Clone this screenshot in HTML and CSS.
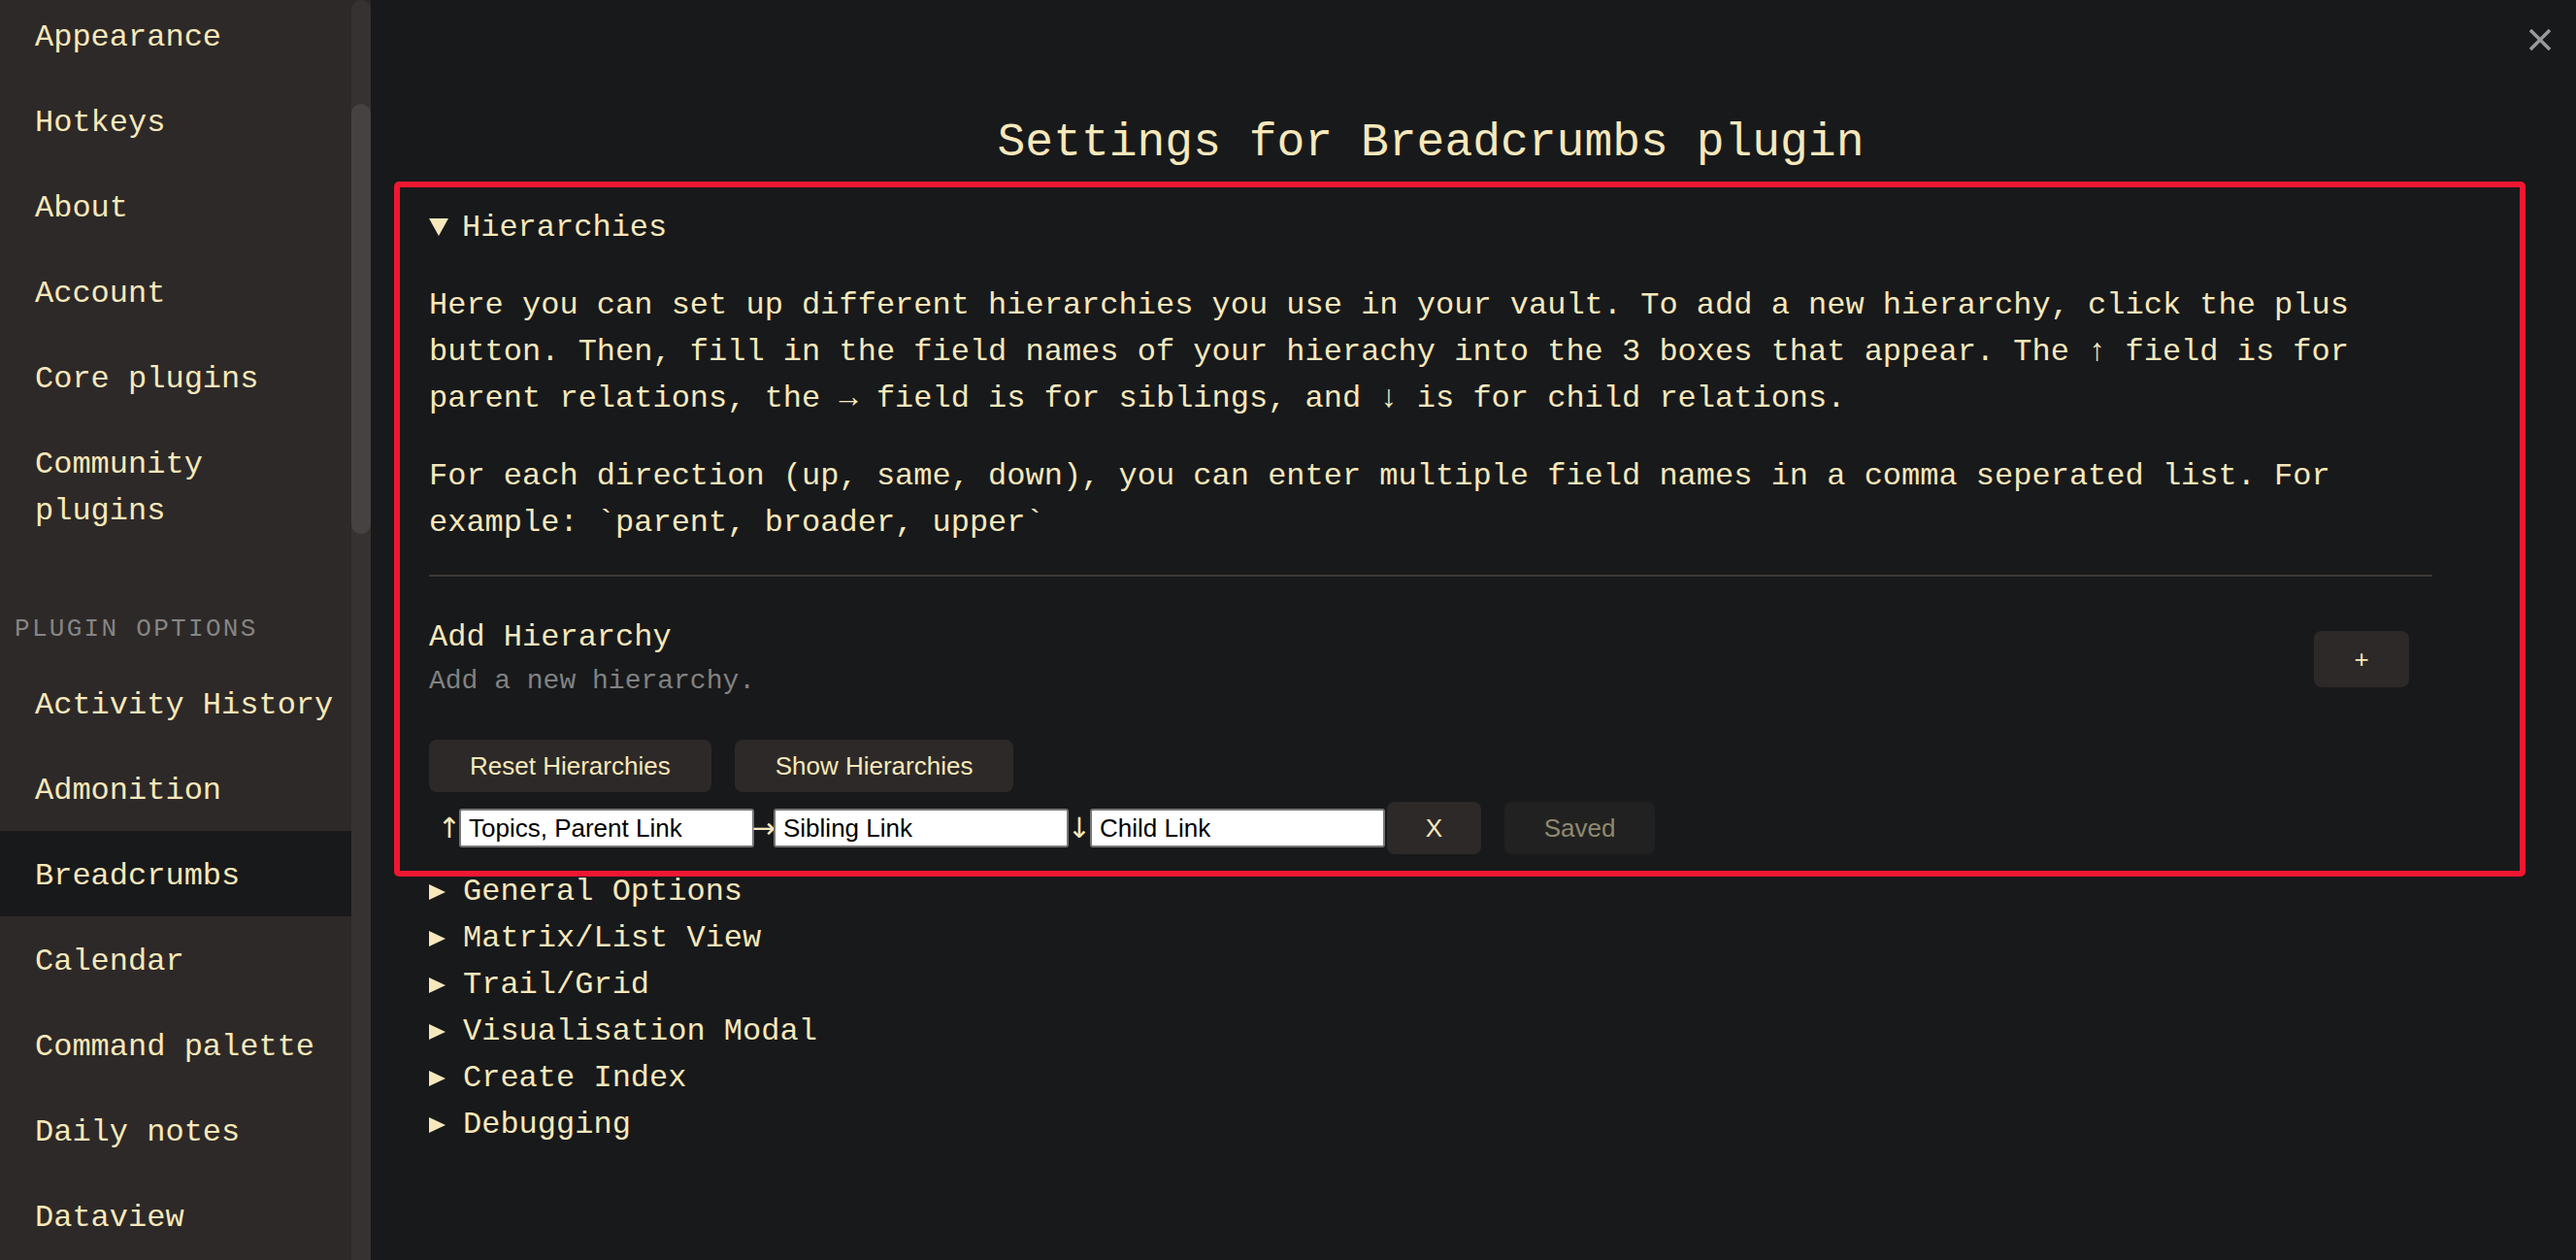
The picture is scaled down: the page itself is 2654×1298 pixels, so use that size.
FILE: index.html
```html
<!DOCTYPE html>
<html lang="en">
<head>
<meta charset="utf-8">
<title>Settings for Breadcrumbs plugin</title>
<link rel="stylesheet" href="styles.css">
</head>
<body>
<div class="app">
  <aside class="sidebar">
    <nav class="nav">
      <div class="nav-item">Appearance</div>
      <div class="nav-item">Hotkeys</div>
      <div class="nav-item">About</div>
      <div class="nav-item">Account</div>
      <div class="nav-item">Core plugins</div>
      <div class="nav-item">Community plugins</div>
      <div class="nav-group-title">Plugin options</div>
      <div class="nav-item">Activity History</div>
      <div class="nav-item">Admonition</div>
      <div class="nav-item is-active">Breadcrumbs</div>
      <div class="nav-item">Calendar</div>
      <div class="nav-item">Command palette</div>
      <div class="nav-item">Daily notes</div>
      <div class="nav-item">Dataview</div>
    </nav>
    <div class="scrollbar"><div class="scroll-thumb"></div></div>
  </aside>
  <main class="main">
    <button class="close-btn" aria-label="Close">
      <svg viewBox="0 0 24 24" width="24" height="24"><path d="M2 2 L22 22 M22 2 L2 22" stroke="#999999" stroke-width="3.5" fill="none"/></svg>
    </button>
    <div class="content">
      <h2 class="title">Settings for Breadcrumbs plugin</h2>
      <div class="section-wrap">
        <details class="section" open>
          <summary class="section-summary">Hierarchies</summary>
          <p class="para">Here you can set up different hierarchies you use in your vault. To add a new hierarchy, click the plus button. Then, fill in the field names of your hierachy into the 3 boxes that appear. The ↑ field is for parent relations, the → field is for siblings, and ↓ is for child relations.</p>
          <p class="para">For each direction (up, same, down), you can enter multiple field names in a comma seperated list. For example: `parent, broader, upper`</p>
          <div class="setting-item">
            <div class="setting-info">
              <div class="setting-name">Add Hierarchy</div>
              <div class="setting-desc">Add a new hierarchy.</div>
            </div>
            <div class="setting-control">
              <button class="btn btn-plus">+</button>
            </div>
          </div>
          <div class="btn-row">
            <button class="btn">Reset Hierarchies</button>
            <button class="btn">Show Hierarchies</button>
          </div>
          <div class="hier-row">
            <span class="arrow arrow-first">↑</span>
            <input class="field" type="text" value="Topics, Parent Link">
            <span class="arrow">→</span>
            <input class="field" type="text" value="Sibling Link">
            <span class="arrow arrow-wide">↓</span>
            <input class="field" type="text" value="Child Link">
            <button class="btn btn-x">X</button>
            <button class="btn btn-saved">Saved</button>
          </div>
        </details>
        <div class="highlight"></div>
      </div>
      <details class="section"><summary class="section-summary">General Options</summary></details>
      <details class="section"><summary class="section-summary">Matrix/List View</summary></details>
      <details class="section"><summary class="section-summary">Trail/Grid</summary></details>
      <details class="section"><summary class="section-summary">Visualisation Modal</summary></details>
      <details class="section"><summary class="section-summary">Create Index</summary></details>
      <details class="section"><summary class="section-summary">Debugging</summary></details>
    </div>
  </main>
</div>
</body>
</html>
```

FILE: styles.css
```css
* { box-sizing: border-box; }

html, body {
  margin: 0;
  padding: 0;
  height: 100%;
  overflow: hidden;
  background: #18191b;
}

body {
  font-family: "Liberation Mono", "DejaVu Sans Mono", monospace;
  font-size: 32px;
  line-height: 48px;
  color: #f6e8bb;
}

.app {
  display: flex;
  height: 1298px;
  overflow: hidden;
}

/* Sidebar */
.sidebar {
  width: 382px;
  flex: none;
  display: flex;
  background: #2d2928;
  overflow: hidden;
}

.nav {
  width: 362px;
  flex: none;
  margin-top: -8px;
}

.nav-item {
  padding: 23px 10px 17px 36px;
  line-height: 48px;
  color: #f6e8bb;
}

.nav-item.is-active {
  background: #18191b;
}

.nav-group-title {
  padding: 61px 10px 13px 15px;
  line-height: 38px;
  font-size: 26px;
  letter-spacing: 2.3px;
  text-transform: uppercase;
  color: #858585;
}

.scrollbar {
  width: 20px;
  flex: none;
  background: #363231;
  border-radius: 10px 10px 0 0;
  padding-top: 107px;
}

.scroll-thumb {
  height: 443px;
  border-radius: 10px;
  background: #464241;
}

/* Main */
.main {
  flex: 1;
  position: relative;
  padding: 108px 148px 0 60px;
}

.close-btn {
  position: absolute;
  top: 29px;
  right: 25px;
  width: 24px;
  height: 24px;
  padding: 0;
  border: none;
  background: transparent;
  display: flex;
}

.content {
  width: 2064px;
}

.title {
  margin: 0;
  padding-top: 6px;
  font-size: 48px;
  line-height: 66px;
  font-weight: normal;
  text-align: center;
}

.section-wrap {
  position: relative;
  margin-top: 28px;
}

.highlight {
  position: absolute;
  top: -21px;
  left: -36px;
  right: -96px;
  bottom: -11px;
  border: 6px solid #ef1731;
  border-radius: 5px;
  pointer-events: none;
}

.section {
  display: block;
}

.section[open] {
  padding-bottom: 12px;
}

.section-summary {
  list-style: none;
  display: block;
  padding-top: 6px;
  line-height: 42px;
  cursor: pointer;
}

.section-summary::-webkit-details-marker {
  display: none;
}

.section-summary::before {
  content: "";
  display: inline-block;
  width: 0;
  height: 0;
  border-top: 8.5px solid transparent;
  border-bottom: 8.5px solid transparent;
  border-left: 17px solid #f6e8bb;
  margin-right: 18px;
}

.section[open] > .section-summary::before {
  border-left: 10.5px solid transparent;
  border-right: 10.5px solid transparent;
  border-top: 18px solid #f6e8bb;
  border-bottom: 0;
  margin-right: 14px;
}

.para {
  margin: 32px 0 0;
  padding-top: 3px;
  line-height: 48px;
}

.para + .para {
  margin-top: 29px;
}

/* Setting item */
.setting-item {
  margin-top: 29px;
  border-top: 2px solid #3e3836;
  padding: 36px 0;
  display: flex;
  align-items: center;
}

.setting-info {
  flex: 1;
}

.setting-name {
  padding-top: 6px;
  line-height: 42px;
}

.setting-desc {
  padding-top: 6px;
  font-size: 28px;
  line-height: 36px;
  color: #828282;
}

.setting-control {
  display: flex;
  margin-top: 8px;
  margin-right: 24px;
}

/* Buttons */
.btn {
  font-family: "Liberation Sans", Arial, sans-serif;
  font-size: 26px;
  height: 54px;
  padding: 0 42px;
  border: none;
  border-radius: 8px;
  background: #2d2928;
  color: #f6e8bb;
  cursor: pointer;
}

.btn-plus {
  width: 98px;
  height: 58px;
  padding: 0;
}

.btn-row {
  margin-top: 6px;
  display: flex;
  gap: 24px;
}

.hier-row {
  margin-top: 10px;
  height: 54px;
  display: flex;
  align-items: center;
  padding-left: 11px;
}

.arrow {
  width: 20px;
  flex: none;
  display: flex;
  justify-content: center;
  font-family: "DejaVu Sans", "Liberation Sans", sans-serif;
  font-size: 29px;
  line-height: 40px;
  color: #f6e8bb;
  overflow: visible;
}

.arrow-wide {
  width: 22px;
}

.field {
  width: 304px;
  height: 40px;
  flex: none;
  margin: 0;
  padding: 0 8px;
  border: 2px solid #767676;
  border-radius: 3px;
  background: #ffffff;
  color: #000000;
  font-family: "Liberation Sans", Arial, sans-serif;
  font-size: 26px;
}

.btn-x {
  width: 97px;
  padding: 0;
  margin-left: 2px;
}

.btn-saved {
  width: 155px;
  padding: 0;
  margin-left: 24px;
  background: #222121;
  color: #8e8a6f;
}
```
